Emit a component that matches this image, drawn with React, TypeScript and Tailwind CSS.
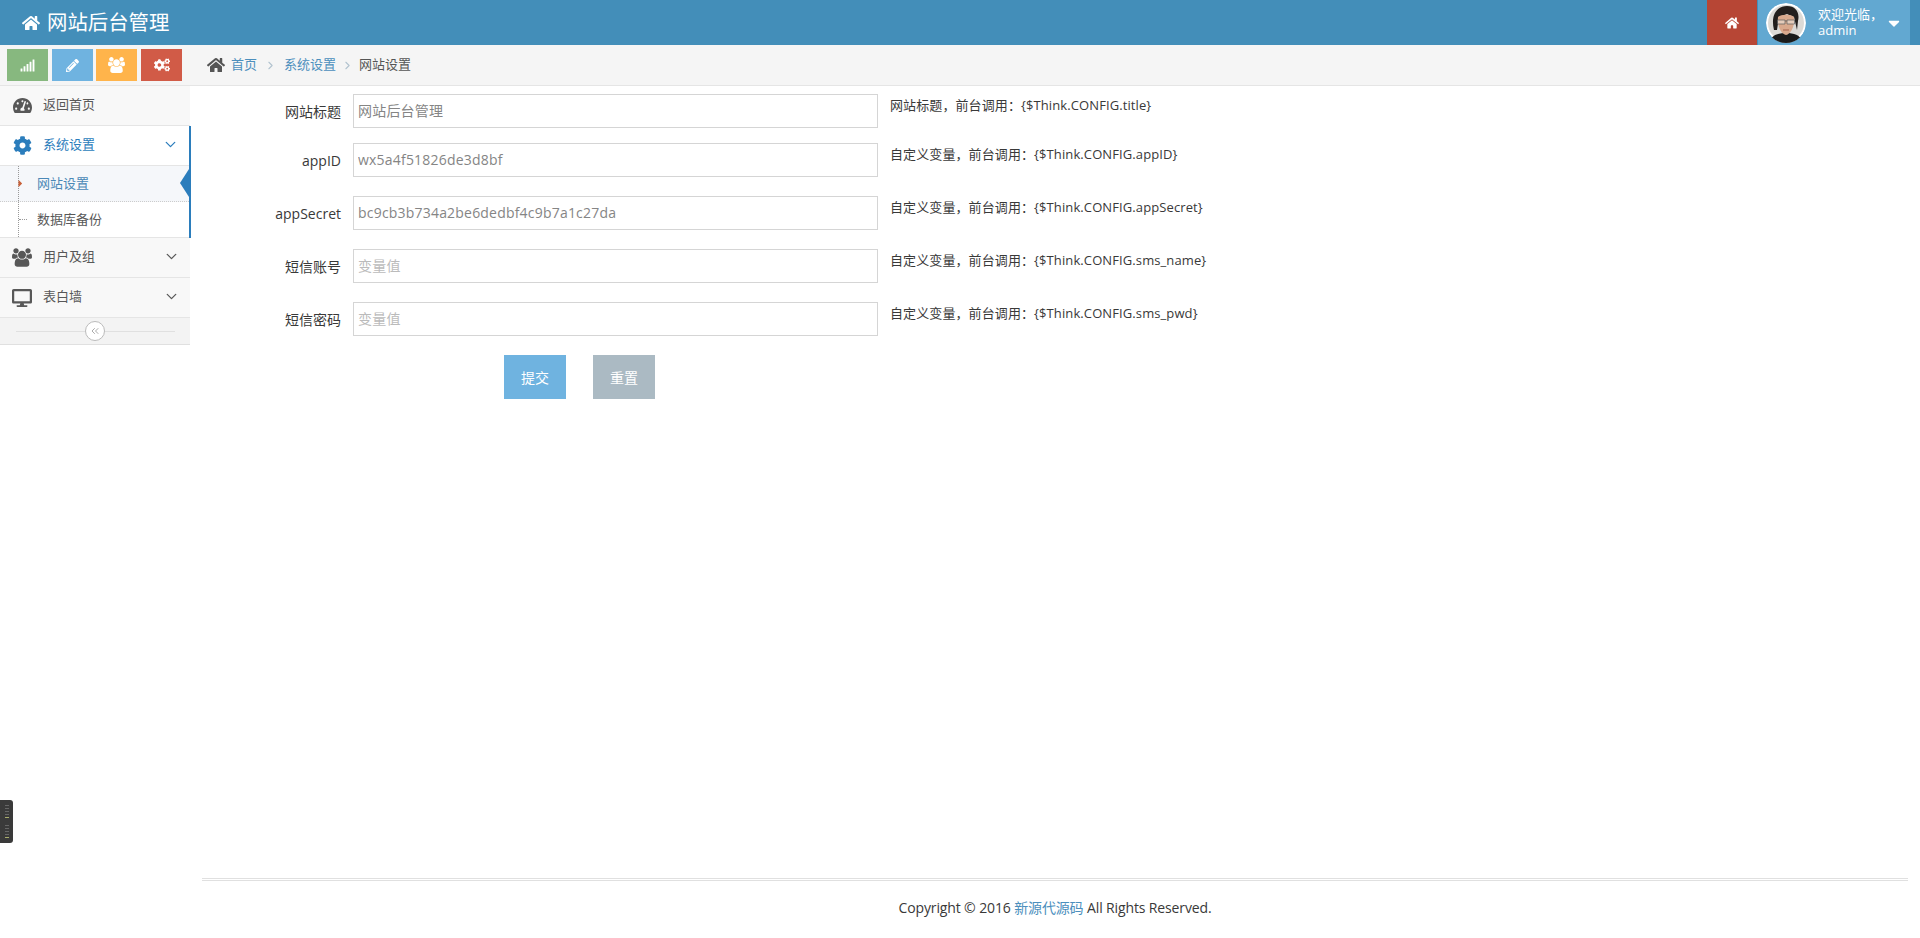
import { ChevronDown, ChevronRight, ChevronsLeft } from "lucide-react";
import {
  FaCaretDown,
  FaCaretRight,
  FaCog,
  FaCogs,
  FaDesktop,
  FaHome,
  FaPencilAlt,
  FaSignal,
  FaTachometerAlt,
} from "react-icons/fa";

const fields = [
  { label: "网站标题", value: "网站后台管理", help: "网站标题，前台调用：{$Think.CONFIG.title}", gap: "" },
  { label: "appID", value: "wx5a4f51826de3d8bf", help: "自定义变量，前台调用：{$Think.CONFIG.appID}", gap: "mt-[15px]" },
  { label: "appSecret", value: "bc9cb3b734a2be6dedbf4c9b7a1c27da", help: "自定义变量，前台调用：{$Think.CONFIG.appSecret}", gap: "mt-[19px]" },
  { label: "短信账号", value: "", help: "自定义变量，前台调用：{$Think.CONFIG.sms_name}", gap: "mt-[19px]" },
  { label: "短信密码", value: "", help: "自定义变量，前台调用：{$Think.CONFIG.sms_pwd}", gap: "mt-[19px]" },
];

// font awesome 4 "users", the react-icons one is flatter
function UsersIcon({ className }: { className?: string }) {
  return (
    <svg viewBox="0 0 1920 1792" fill="currentColor" className={className}>
      <path d="M593 896q-162 5-265 128h-134q-82 0-138-40.500t-56-118.500q0-353 124-353 6 0 43.500 21t97.500 42.500 119 21.500q67 0 133-23-5 37-5 66 0 139 81 256zm1071 637q0 120-73 189.500t-194 69.500h-874q-121 0-194-69.500t-73-189.500q0-53 3.500-103.500t14-109 26.500-108.500 43-97.500 62-81 85.500-53.500 111.500-20q10 0 43 21.500t73 48 107 48 135 21.500 135-21.500 107-48 73-48 43-21.500q61 0 111.500 20t85.500 53.500 62 81 43 97.500 26.500 108.500 14 109 3.500 103.500zm-1024-1277q0 106-75 181t-181 75-181-75-75-181 75-181 181-75 181 75 75 181zm704 384q0 159-112.500 271.500t-271.500 112.500-271.500-112.500-112.500-271.500 112.500-271.500 271.500-112.500 271.500 112.500 112.500 271.500zm576 225q0 78-56 118.500t-138 40.500h-134q-103-123-265-128 81-117 81-256 0-29-5-66 66 23 133 23 59 0 119-21.500t97.500-42.500 43.500-21q124 0 124 353zm-128-609q0 106-75 181t-181 75-181-75-75-181 75-181 181-75 181 75 75 181z" />
    </svg>
  );
}

function Avatar() {
  return (
    <svg viewBox="0 0 40 40" className="w-10 h-10 rounded-full">
      <circle cx="20" cy="20" r="20" fill="#fff" />
      <circle cx="20" cy="20" r="18" fill="#dcdad6" />
      <path d="M4 38c2-6 8-8 16-8s14 2 16 8c-4 2-10 2-16 2s-12 0-16-2z" fill="#1b1b1b" />
      <path d="M8 27C4 11 12 3 21 3c9 0 13 7 11 15l-1 9-3-13-7-3-8 3-2 13z" fill="#231f1d" />
      <path d="M12 14c3-3 13-3 16 0 1 9-3 17-8 18-5-1-9-9-8-18z" fill="#d9a98d" />
      <path d="M11.500 17h7.500v4h-7.500zM21 17h7.500v4H21z" fill="#eee9e1" fillOpacity="0.55" stroke="#5c5c5c" strokeWidth="0.7" />
      <path d="M19 18h2" stroke="#5c5c5c" strokeWidth="0.7" />
      <path d="M17 27h6" stroke="#a5634f" strokeWidth="1" />
    </svg>
  );
}

function NavItem({ icon, text, open, active }: { icon: React.ReactNode; text: string; open?: boolean; active?: boolean }) {
  return (
    <div className={`h-10 flex items-center border-b border-[#e5e5e5] ${active ? "bg-white text-[#2b7dbc]" : "bg-[#f8f8f8] text-[#585858]"}`}>
      <span className="w-[43px] flex justify-center pl-[1px] text-[19px]">{icon}</span>
      <span className="text-[13px] flex-1 -mt-[2px]">{text}</span>
      {open !== undefined && <ChevronDown size={17} className="mr-[10px] -mt-[2px]" strokeWidth={1.8} />}
    </div>
  );
}

export default function App() {
  return (
    <div className="h-screen flex flex-col bg-white overflow-hidden text-[#393939] font-[family-name:'Open_Sans','Noto_Sans_CJK_SC',sans-serif]">
      <header className="h-[45px] shrink-0 bg-[#438eb9] flex items-stretch pr-[10px] text-white">
        <div className="flex items-center pl-[22px] flex-1">
          <FaHome className="text-[18px] mr-[7px]" />
          <span className="text-[20.400px]">网站后台管理</span>
        </div>
        <div className="w-[50px] bg-[#b74635] flex items-center justify-center">
          <FaHome className="text-[14px]" />
        </div>
        <div className="w-[152px] ml-[1px] bg-[#62a8d1] flex items-center pl-2">
          <Avatar />
          <div className="ml-3 -mt-[2px] text-[13px] leading-4 w-[62px] whitespace-nowrap">
            欢迎光临，
            <br />
            admin
          </div>
          <FaCaretDown className="text-[18px] ml-[5px]" />
        </div>
      </header>

      <div className="flex-1 flex min-h-0">
        <aside className="w-[190px] shrink-0 self-start">
          <div className="h-[41px] bg-[#f5f5f5] border-b border-[#e5e5e5] flex items-start pt-1 pl-[7px] gap-1">
            <div className="w-[41px] h-8 bg-[#87b87f] text-white flex items-center justify-center text-[15px]"><FaSignal /></div>
            <div className="w-[41px] h-8 bg-[#6fb3e0] text-white flex items-center justify-center text-[13px]"><FaPencilAlt /></div>
            <div className="w-[41px] h-8 -ml-[1px] bg-[#ffb44b] text-white flex items-center justify-center"><UsersIcon className="w-[17px] h-[16px]" /></div>
            <div className="w-[41px] h-8 bg-[#d15b47] text-white flex items-center justify-center text-[16px]"><FaCogs /></div>
          </div>
          <NavItem icon={<FaTachometerAlt />} text="返回首页" />
          <div className="border-r-2 border-[#2b7dbc] mr-[-1px]">
            <NavItem icon={<FaCog />} text="系统设置" open active />
            <div className="relative bg-white border-b border-[#e5e5e5]">
              <div className="h-9 flex items-center bg-[#f5f7fa] border-b border-dotted border-[#ccc] pl-[37px] text-[13px] text-[#4b88b7]">
                网站设置
              </div>
              <div className="absolute left-[18px] top-0 bottom-0 border-l border-dotted border-[#999]" />
              <FaCaretRight className="absolute left-[15px] top-[12px] text-[11px] text-[#c86139]" />
              <div className="absolute right-0 top-[3px] w-[9px] h-7 bg-[#2b7dbc] [clip-path:polygon(100%_0,100%_100%,0_50%)]" />
              <div className="h-[35px] flex items-center pl-[37px] text-[13px] text-[#585858]">数据库备份</div>
              <div className="absolute left-[19px] top-[53px] w-[8px] border-t border-dotted border-[#999]" />
            </div>
          </div>
          <NavItem icon={<UsersIcon className="w-[20px] h-[19px]" />} text="用户及组" open />
          <NavItem icon={<FaDesktop className="text-[20px]" />} text="表白墙" open />
          <div className="h-[27px] bg-[#f3f3f3] border-b border-[#e0e0e0] relative flex items-center justify-center">
            <div className="absolute left-4 right-[15px] top-[13px] border-t border-[#e0e0e0]" />
            <div className="relative w-5 h-5 rounded-full bg-white border border-[#bbb] flex items-center justify-center text-[#aaa]">
              <ChevronsLeft size={12} />
            </div>
          </div>
        </aside>

        <main className="flex-1 min-w-0 flex flex-col">
          <div className="h-[41px] shrink-0 bg-[#f5f5f5] border-b border-[#e5e5e5] flex items-center pl-[17px] text-[13px]">
            <FaHome className="text-[18px] text-[#555] mr-[6px]" />
            <span className="text-[#4c8fbd]">首页</span>
            <ChevronRight size={13} className="text-[#b2c3cf] ml-[7px] mr-[7px]" />
            <span className="text-[#4c8fbd]">系统设置</span>
            <ChevronRight size={13} className="text-[#b2c3cf] mx-[5px]" />
            <span className="text-[#555]">网站设置</span>
          </div>

          <form className="pt-[8px] flex-1">
            {fields.map((f) => (
              <div key={f.label} className={`flex items-start ${f.gap}`}>
                <label className="w-[151px] h-[34px] pt-[1px] flex items-center justify-end text-[14px] text-[#393939]">{f.label}</label>
                <input
                  readOnly
                  value={f.value}
                  placeholder="变量值"
                  className="w-[525px] h-[34px] ml-3 border border-[#d5d5d5] pl-1 pb-[2px] text-[14px] tracking-[0.2px] text-[#858585] placeholder:text-[#bbb] outline-none"
                />
                <span className="ml-3 mt-[2px] text-[13px] tracking-[0.1px] text-[#393939]">{f.help}</span>
              </div>
            ))}
            <div className="flex pl-[314px] gap-[27px] mt-[19px]">
              <button type="button" className="w-[62px] h-11 bg-[#6fb3e0] text-white text-[14px]">提交</button>
              <button type="button" className="w-[62px] h-11 bg-[#abbac3] text-white text-[14px]">重置</button>
            </div>
          </form>

          <footer className="shrink-0 mx-3 h-[60px] border-t-[3px] border-double border-[#e0e0e0] flex items-center justify-center text-[14px] tracking-[-0.13px] text-[#393939] pb-[4px]">
            <span>
              Copyright © 2016 <span className="text-[#4c8fbd]">新源代源码</span> All Rights Reserved.
            </span>
          </footer>
        </main>
      </div>

      <div className="fixed left-0 top-[800px] w-[13px] h-[43px] bg-[#3a3a3a] rounded-r-[3px] flex flex-col items-center justify-center gap-[7px]">
        <div className="w-[4px] h-[13px] bg-[repeating-linear-gradient(to_bottom,#666_0_1px,#3a3a3a_1px_3px)] border-b border-[#a8ad6c]" />
        <div className="w-[4px] h-[13px] bg-[repeating-linear-gradient(to_bottom,#666_0_1px,#3a3a3a_1px_3px)] border-b border-[#a8ad6c]" />
      </div>
    </div>
  );
}
